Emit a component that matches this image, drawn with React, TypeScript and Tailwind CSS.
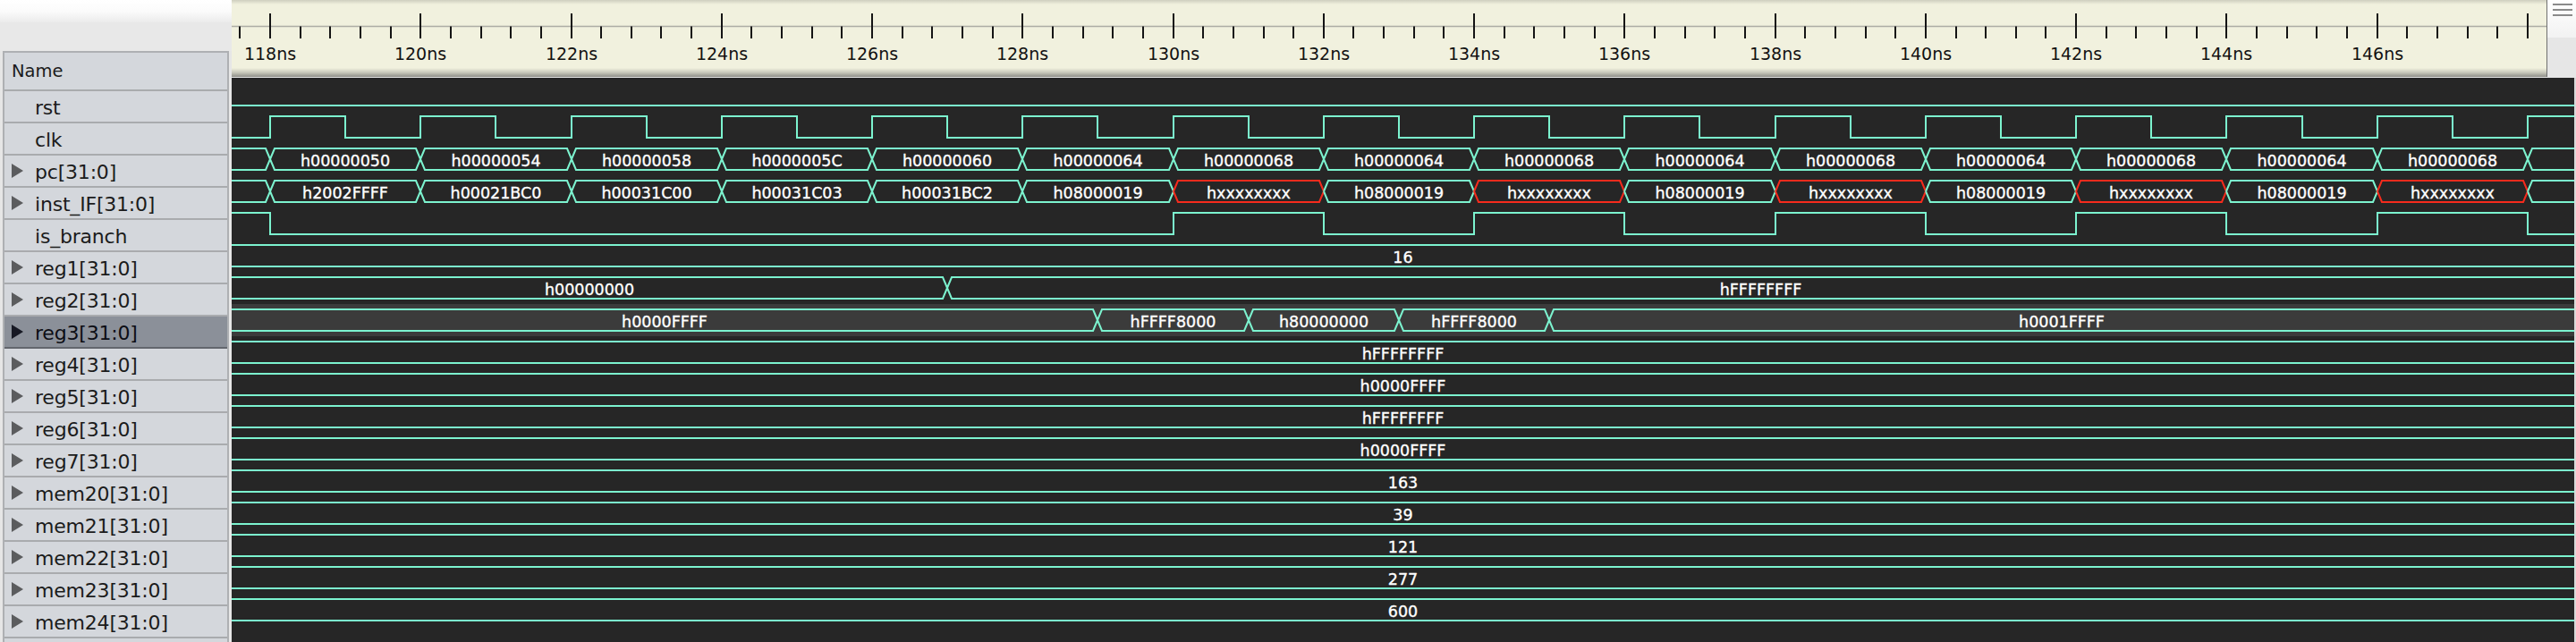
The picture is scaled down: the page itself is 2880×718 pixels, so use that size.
import React from "react";

// time axis: 118ns sits 43px into the wave pane, 2ns = 168px
const NS = 84.13;
const WAVE_W = 2619;
const RULER_W = 2588;
const xOf = (t: number) => Math.round(43 + (t - 118) * NS);

const TEAL = "#7cf3cf";
const RED = "#f62b1d";
const HALF_X = 5;

type Row = { name: string; group: boolean };

const rows: Row[] = [
  { name: "rst", group: false },
  { name: "clk", group: false },
  { name: "pc[31:0]", group: true },
  { name: "inst_IF[31:0]", group: true },
  { name: "is_branch", group: false },
  { name: "reg1[31:0]", group: true },
  { name: "reg2[31:0]", group: true },
  { name: "reg3[31:0]", group: true },
  { name: "reg4[31:0]", group: true },
  { name: "reg5[31:0]", group: true },
  { name: "reg6[31:0]", group: true },
  { name: "reg7[31:0]", group: true },
  { name: "mem20[31:0]", group: true },
  { name: "mem21[31:0]", group: true },
  { name: "mem22[31:0]", group: true },
  { name: "mem23[31:0]", group: true },
  { name: "mem24[31:0]", group: true },
];

const SELECTED = 7;

const evens = (from: number, to: number) => {
  const out: number[] = [];
  for (let t = from; t <= to; t += 2) out.push(t);
  return out;
};

function Bit({ row, init, edges }: { row: number; init: 0 | 1; edges: number[] }) {
  const hi = 7 + 36 * row;
  const lo = hi + 24;
  let level = init;
  let d = `M0 ${level ? hi : lo}`;
  for (const t of edges) {
    const x = xOf(t);
    d += ` L${x} ${level ? hi : lo}`;
    level = level ? 0 : 1;
    d += ` L${x} ${level ? hi : lo}`;
  }
  d += ` L${WAVE_W} ${level ? hi : lo}`;
  return <path d={d} fill="none" stroke={TEAL} strokeWidth={2} />;
}

function Bus({
  row,
  times = [],
  values,
  bad = [],
}: {
  row: number;
  times?: number[];
  values: string[];
  bad?: number[];
}) {
  const hi = 7 + 36 * row;
  const lo = hi + 24;
  const mid = hi + 12;
  const bounds = [0, ...times.map(xOf), WAVE_W];
  return (
    <g>
      {values.map((v, k) => {
        const a = bounds[k];
        const b = bounds[k + 1];
        const l = a > 0;
        const r = b < WAVE_W;
        const edge = (y: number) =>
          (l ? `M${a} ${mid} L${a + HALF_X} ${y}` : `M${a} ${y}`) +
          ` L${r ? b - HALF_X : b} ${y}` +
          (r ? ` L${b} ${mid}` : "");
        const color = bad.includes(k) ? RED : TEAL;
        const show = v && b - a > v.length * 11 + 24;
        return (
          <g key={k}>
            <path d={`${edge(hi)} ${edge(lo)}`} fill="none" stroke={color} strokeWidth={2} />
            {show && (
              <text
                x={(a + b) / 2}
                y={mid + 1.5}
                textAnchor="middle"
                dominantBaseline="central"
                fill="#ffffff"
                stroke="#ffffff"
                strokeWidth={0.35}
                fontSize={17.5}
                fontFamily="'DejaVu Sans', sans-serif"
              >
                {v}
              </text>
            )}
          </g>
        );
      })}
    </g>
  );
}

function Ruler() {
  const ticks: { x: number; t: number; major: boolean }[] = [];
  for (let k = 0; ; k++) {
    const t = 117.6 + 0.4 * k;
    const x = xOf(t);
    if (x > RULER_W - 4) break;
    const r = Math.round(t);
    ticks.push({ x, t: r, major: Math.abs(t - r) < 1e-6 && r % 2 === 0 });
  }
  return (
    <svg width={RULER_W} height={86} className="block">
      <line x1={0} x2={RULER_W} y1={29.5} y2={29.5} stroke="#adada5" strokeWidth={1.5} />
      {ticks.map((tk, i) => (
        <line
          key={i}
          x1={tk.x}
          x2={tk.x}
          y1={tk.major ? 15 : 29.5}
          y2={43}
          stroke="#141414"
          strokeWidth={2}
        />
      ))}
      {ticks
        .filter((tk) => tk.major && tk.x + 32 < RULER_W)
        .map((tk) => (
          <text
            key={tk.t}
            x={tk.x}
            y={67}
            textAnchor="middle"
            fill="#111111"
            fontSize={19}
            fontFamily="'DejaVu Sans', sans-serif"
          >
            {tk.t}ns
          </text>
        ))}
    </svg>
  );
}

function Triangle({ dark }: { dark: boolean }) {
  return (
    <svg width={13} height={16} className="block">
      <polygon points="0,0 13,8 0,16" fill={dark ? "#171924" : "#5b5c5e"} />
    </svg>
  );
}

function Waves() {
  const pcVals = [
    "h0000004C",
    "h00000050",
    "h00000054",
    "h00000058",
    "h0000005C",
    "h00000060",
    "h00000064",
    "h00000068",
    "h00000064",
    "h00000068",
    "h00000064",
    "h00000068",
    "h00000064",
    "h00000068",
    "h00000064",
    "h00000068",
    "h00000064",
  ];
  const instVals = [
    "h00000000",
    "h2002FFFF",
    "h00021BC0",
    "h00031C00",
    "h00031C03",
    "h00031BC2",
    "h08000019",
    "hxxxxxxxx",
    "h08000019",
    "hxxxxxxxx",
    "h08000019",
    "hxxxxxxxx",
    "h08000019",
    "hxxxxxxxx",
    "h08000019",
    "hxxxxxxxx",
    "h08000019",
  ];
  const constants: [number, string][] = [
    [5, "16"],
    [8, "hFFFFFFFF"],
    [9, "h0000FFFF"],
    [10, "hFFFFFFFF"],
    [11, "h0000FFFF"],
    [12, "163"],
    [13, "39"],
    [14, "121"],
    [15, "277"],
    [16, "600"],
  ];
  return (
    <svg width={WAVE_W} height={631} className="block">
      <rect x={0} y={1 + 36 * SELECTED} width={WAVE_W} height={36} fill="#3b3b3b" />
      <Bit row={0} init={0} edges={[]} />
      <Bit row={1} init={0} edges={Array.from({ length: 31 }, (_, i) => 118 + i)} />
      <Bus row={2} times={evens(118, 148)} values={pcVals} />
      <Bus row={3} times={evens(118, 148)} values={instVals} bad={[7, 9, 11, 13, 15]} />
      <Bit row={4} init={1} edges={[118, 130, 132, 134, 136, 138, 140, 142, 144, 146, 148]} />
      <Bus row={6} times={[127]} values={["h00000000", "hFFFFFFFF"]} />
      <Bus
        row={7}
        times={[129, 131, 133, 135]}
        values={["h0000FFFF", "hFFFF8000", "h80000000", "hFFFF8000", "h0001FFFF"]}
      />
      {constants.map(([r, v]) => (
        <Bus key={r} row={r} values={[v]} />
      ))}
    </svg>
  );
}

export default function App() {
  return (
    <div className="flex h-[718px] w-[2880px] overflow-hidden bg-[#e6e6e6] font-['DejaVu_Sans',sans-serif]">
      {/* signal names */}
      <div className="flex w-[259px] shrink-0 flex-col">
        <div className="h-[25px] bg-gradient-to-b from-[#ffffff] via-[#fbfbfb] to-[#ebebeb]" />
        <div className="h-[32px] bg-[#e8e8e8]" />
        <div className="ml-[3px] w-[253px] flex-1 border-x-2 border-t-2 border-[#aeb0b3] bg-[#d4d7dc]">
          <div className="flex h-[43px] items-center border-b-2 border-[#a9abae] pl-[8px] text-[19.5px] text-[#1b1b1b]">
            Name
          </div>
          {rows.map((r, i) => (
            <div
              key={r.name}
              className={
                i === SELECTED
                  ? "flex h-[36px] items-center border-b-2 border-[#62666d] bg-[#8b9099] pl-[8px] text-[22px] text-[#0c0d14]"
                  : "flex h-[36px] items-center border-b-2 border-[#a9abae] pl-[8px] text-[22px] text-[#1b1b1b]"
              }
            >
              <div className="w-[26px] shrink-0">{r.group && <Triangle dark={i === SELECTED} />}</div>
              <span className="pt-[3px] tracking-[-0.2px]">{r.name}</span>
            </div>
          ))}
        </div>
      </div>

      {/* ruler + waves */}
      <div className="flex flex-1 flex-col">
        <div className="flex h-[87px] shrink-0">
          <div className="h-[86px] w-[2589px] border-r border-[#707070] bg-[linear-gradient(to_bottom,#cfcfbf_0px,#f1f1de_5px,#f1f1de_76px,#c9c9bb_81px,#8e8e88_86px)]">
            <Ruler />
          </div>
          <div className="flex flex-1 flex-col">
            <div className="flex h-[42px] flex-col gap-[4px] bg-gradient-to-b from-[#ffffff] to-[#f2f2f2] pl-[6px] pt-[4px]">
              <div className="h-[2px] w-[22px] bg-[#8a8a8a]" />
              <div className="h-[2px] w-[22px] bg-[#8a8a8a]" />
              <div className="h-[2px] w-[22px] bg-[#8a8a8a]" />
            </div>
            <div className="flex-1 bg-[#e6e6e6]" />
          </div>
        </div>
        <div className="flex flex-1">
          <div className="w-[2619px] bg-[#262626]">
            <Waves />
          </div>
          <div className="flex-1 bg-[#d9d9d9]" />
        </div>
      </div>
    </div>
  );
}
